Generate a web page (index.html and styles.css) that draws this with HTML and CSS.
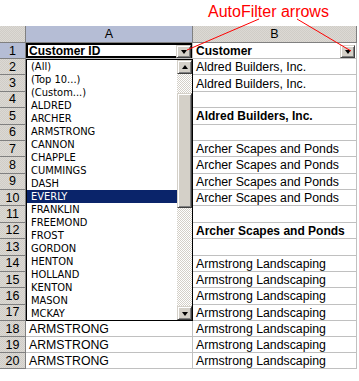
FILE: index.html
```html
<!DOCTYPE html>
<html lang="en">
<head>
    <meta charset="UTF-8">
    <title>AutoFilter arrows</title>
    <link rel="stylesheet" href="styles.css">
</head>
<body>
<div class="page">
    <div class="callout">AutoFilter arrows</div>

    <div class="sheet">
        <!-- column headers -->
        <div class="hdr corner"></div>
        <div class="hdr col active">A</div>
        <div class="hdr col">B</div>

        <!-- row 1 : filter headings -->
        <div class="hdr row active">1</div>
        <div class="cell bold a1">Customer ID<span class="filter-btn"><i class="tri-down"></i></span></div>
        <div class="cell bold">Customer<span class="filter-btn"><i class="tri-down"></i></span></div>

        <div class="hdr row">2</div><div class="cell"></div><div class="cell">Aldred Builders, Inc.</div>
        <div class="hdr row">3</div><div class="cell"></div><div class="cell">Aldred Builders, Inc.</div>
        <div class="hdr row">4</div><div class="cell"></div><div class="cell"></div>
        <div class="hdr row">5</div><div class="cell"></div><div class="cell bold">Aldred Builders, Inc.</div>
        <div class="hdr row">6</div><div class="cell"></div><div class="cell"></div>
        <div class="hdr row">7</div><div class="cell"></div><div class="cell">Archer Scapes and Ponds</div>
        <div class="hdr row">8</div><div class="cell"></div><div class="cell">Archer Scapes and Ponds</div>
        <div class="hdr row">9</div><div class="cell"></div><div class="cell">Archer Scapes and Ponds</div>
        <div class="hdr row">10</div><div class="cell"></div><div class="cell">Archer Scapes and Ponds</div>
        <div class="hdr row">11</div><div class="cell"></div><div class="cell"></div>
        <div class="hdr row">12</div><div class="cell"></div><div class="cell bold">Archer Scapes and Ponds</div>
        <div class="hdr row">13</div><div class="cell"></div><div class="cell"></div>
        <div class="hdr row">14</div><div class="cell"></div><div class="cell">Armstrong Landscaping</div>
        <div class="hdr row">15</div><div class="cell"></div><div class="cell">Armstrong Landscaping</div>
        <div class="hdr row">16</div><div class="cell"></div><div class="cell">Armstrong Landscaping</div>
        <div class="hdr row">17</div><div class="cell"></div><div class="cell">Armstrong Landscaping</div>
        <div class="hdr row">18</div><div class="cell">ARMSTRONG</div><div class="cell">Armstrong Landscaping</div>
        <div class="hdr row">19</div><div class="cell">ARMSTRONG</div><div class="cell">Armstrong Landscaping</div>
        <div class="hdr row">20</div><div class="cell">ARMSTRONG</div><div class="cell">Armstrong Landscaping</div>

        <!-- open AutoFilter list for column A -->
        <div class="dropdown">
            <ul class="list">
                <li>(All)</li>
                <li>(Top 10...)</li>
                <li>(Custom...)</li>
                <li>ALDRED</li>
                <li>ARCHER</li>
                <li>ARMSTRONG</li>
                <li>CANNON</li>
                <li>CHAPPLE</li>
                <li>CUMMINGS</li>
                <li>DASH</li>
                <li class="selected">EVERLY</li>
                <li>FRANKLIN</li>
                <li>FREEMOND</li>
                <li>FROST</li>
                <li>GORDON</li>
                <li>HENTON</li>
                <li>HOLLAND</li>
                <li>KENTON</li>
                <li>MASON</li>
                <li>MCKAY</li>
            </ul>
            <div class="scrollbar">
                <span class="sb-btn"><i class="tri-up"></i></span>
                <div class="track"><div class="thumb"></div></div>
                <span class="sb-btn"><i class="tri-down"></i></span>
            </div>
        </div>
    </div>

    <!-- pointer lines from the callout to the arrows -->
    <svg class="pointers" width="359" height="381" viewBox="0 0 359 381">
        <line x1="259" y1="19" x2="187" y2="50" />
        <line x1="297" y1="19" x2="351" y2="51" />
    </svg>
</div>
</body>
</html>
```

FILE: styles.css
```css
body {
    margin: 0;
    background: #fff;
    font-family: "Liberation Sans", Arial, sans-serif;
}

.page {
    position: relative;
    width: 359px;
    height: 381px;
}

/* red annotation above the sheet */
.callout {
    height: 26px;
    box-sizing: border-box;
    padding: 1px 0 0 208px;
    color: #f00;
    font-size: 16px;
    line-height: 22px;
}

.pointers {
    position: absolute;
    top: 0;
    left: 0;
    pointer-events: none;
}

.pointers line {
    stroke: #f00;
    stroke-width: 1;
}

/* worksheet grid */
.sheet {
    position: relative;
    display: grid;
    grid-template-columns: 26px 167px 164px;
    grid-template-rows: 17px 16px repeat(16, 16.375px) repeat(3, 16px);
    width: 357px;
}

.hdr {
    box-sizing: border-box;
    display: flex;
    align-items: center;
    justify-content: center;
    border-right: 1px solid #808080;
    border-bottom: 1px solid #808080;
    background: repeating-conic-gradient(#d0cdc7 0 25%, #dcd9d4 0 50%) 0 0 / 2px 2px;
    font-size: 12.5px;
    color: #000;
}

.hdr.active {
    background: #b5bdd5;
}

.cell {
    position: relative;
    box-sizing: border-box;
    display: flex;
    align-items: center;
    padding: 1px 2px 0 3px;
    border-right: 1px solid #c0c0c0;
    border-bottom: 1px solid #c0c0c0;
    font-size: 12.3px;
    white-space: nowrap;
    overflow: hidden;
}

.cell.bold {
    font-weight: bold;
    font-size: 12px;
}

/* active cell A1 */
.cell.a1 {
    box-shadow: inset 0 0 0 2px #000;
}

/* AutoFilter drop-down buttons */
.filter-btn {
    position: absolute;
    top: 2px;
    right: 1px;
    width: 15px;
    height: 13px;
}

.filter-btn,
.sb-btn,
.thumb {
    box-sizing: border-box;
    display: flex;
    align-items: center;
    justify-content: center;
    background: #d4d0c8;
    border: 1px solid;
    border-color: #d4d0c8 #404040 #404040 #d4d0c8;
    box-shadow: inset 1px 1px #fff, inset -1px -1px #808080;
}

.tri-down,
.tri-up {
    display: block;
    width: 0;
    height: 0;
    border-left: 3.5px solid transparent;
    border-right: 3.5px solid transparent;
}

.tri-down {
    border-top: 4px solid #000;
    margin-top: 1px;
}

.tri-up {
    border-bottom: 4px solid #000;
}

/* open filter list */
.dropdown {
    position: absolute;
    left: 26px;
    top: 33px;
    width: 167px;
    height: 262px;
    box-sizing: border-box;
    display: flex;
    background: #fff;
    border: 1px solid #000;
    z-index: 2;
}

.list {
    flex: 1;
    margin: 0;
    padding: 0;
    list-style: none;
    font-family: "DejaVu Sans Condensed", "DejaVu Sans", sans-serif;
    font-stretch: condensed;
    font-size: 11px;
}

.list li {
    height: 13px;
    line-height: 14px;
    padding-left: 4px;
    white-space: nowrap;
}

.list li.selected {
    background: #0a246a;
    color: #fff;
}

.scrollbar {
    width: 15px;
    display: flex;
    flex-direction: column;
}

.sb-btn {
    height: 14px;
}

.track {
    flex: 1;
    background: repeating-conic-gradient(#d4d0c8 0 25%, #fff 0 50%) 0 0 / 2px 2px;
}

.thumb {
    margin-top: 19px;
    height: 115px;
}
```
